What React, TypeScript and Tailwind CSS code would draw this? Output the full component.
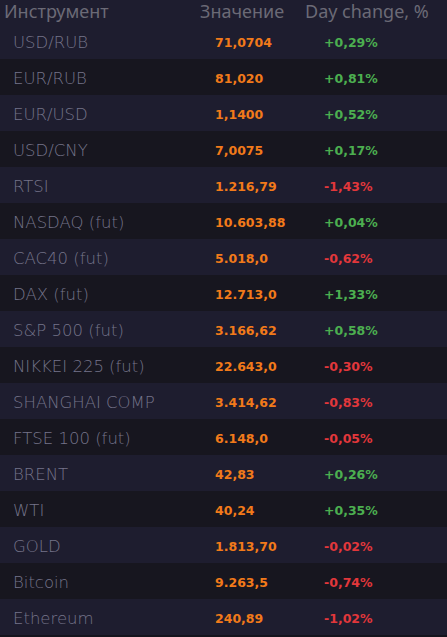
import React from "react";

type Quote = {
  name: string;
  value: string;
  change: string;
};

const quotes: Quote[] = [
  { name: "USD/RUB", value: "71,0704", change: "+0,29%" },
  { name: "EUR/RUB", value: "81,020", change: "+0,81%" },
  { name: "EUR/USD", value: "1,1400", change: "+0,52%" },
  { name: "USD/CNY", value: "7,0075", change: "+0,17%" },
  { name: "RTSI", value: "1.216,79", change: "-1,43%" },
  { name: "NASDAQ (fut)", value: "10.603,88", change: "+0,04%" },
  { name: "CAC40 (fut)", value: "5.018,0", change: "-0,62%" },
  { name: "DAX (fut)", value: "12.713,0", change: "+1,33%" },
  { name: "S&P 500 (fut)", value: "3.166,62", change: "+0,58%" },
  { name: "NIKKEI 225 (fut)", value: "22.643,0", change: "-0,30%" },
  { name: "SHANGHAI COMP", value: "3.414,62", change: "-0,83%" },
  { name: "FTSE 100 (fut)", value: "6.148,0", change: "-0,05%" },
  { name: "BRENT", value: "42,83", change: "+0,26%" },
  { name: "WTI", value: "40,24", change: "+0,35%" },
  { name: "GOLD", value: "1.813,70", change: "-0,02%" },
  { name: "Bitcoin", value: "9.263,5", change: "-0,74%" },
  { name: "Ethereum", value: "240,89", change: "-1,02%" },
];

const App = () => {
  return (
    <div className="h-[637px] w-[447px] overflow-hidden bg-[#15141d]">
      <div className="flex h-[23px] items-center bg-[#1e1d2f] font-['Noto_Sans',sans-serif] text-[18px] text-[#6b6a76]">
        <div className="w-[200px] pl-[4px]">Инструмент</div>
        <div className="w-[105px]">Значение</div>
        <div>Day change, %</div>
      </div>
      <ul>
        {quotes.map((q, i) => (
          <li
            key={q.name}
            className={
              "flex h-9 items-center pt-[4px] " +
              (i % 2 === 0 ? "bg-[#1e1d2f]" : "bg-[#17161f]")
            }
          >
            <span className="w-[215px] pl-[13px] font-['DejaVu_Sans',sans-serif] text-[16.5px] font-extralight text-[#75748a]">
              {q.name}
            </span>
            <span className="w-[109px] font-['DejaVu_Sans',sans-serif] text-[12.5px] font-bold text-[#f27a1a]">
              {q.value}
            </span>
            <span
              className={
                "font-['DejaVu_Sans',sans-serif] text-[12.5px] font-bold " +
                (q.change.startsWith("-") ? "text-[#e2373b]" : "text-[#4caf50]")
              }
            >
              {q.change}
            </span>
          </li>
        ))}
      </ul>
    </div>
  );
};

export default App;
